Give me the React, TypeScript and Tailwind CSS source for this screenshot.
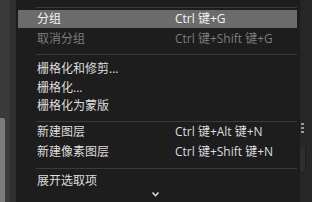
import React from 'react';

type Item = { label: string; shortcut?: string; disabled?: boolean; active?: boolean; mt: string };

const font = { fontFamily: '"Open Sans", "Noto Sans CJK SC", sans-serif' };

function Row({ label, shortcut, disabled, active, mt }: Item) {
  return (
    <div
      className={`${mt} ml-[2px] mr-[3px] h-[18px] flex items-center pl-[19px] text-[12px] leading-none ${
        active ? 'bg-[#6b6b6b] text-[#f4f4f4]' : disabled ? 'text-[#7c7c7c]' : 'text-[#dddddd]'
      }`}
    >
      <span className="w-[138px] whitespace-nowrap">{label}</span>
      {shortcut && <span className="whitespace-nowrap">{shortcut}</span>}
    </div>
  );
}

function Sep({ mt }: { mt: string }) {
  return <div className={`${mt} ml-[20px] mr-[3px] h-px bg-[#3a3a3a]`} />;
}

export default function App() {
  return (
    <div className="w-[312px] h-[202px] flex overflow-hidden bg-[#1d1d1d]" style={font}>
      {/* left panel edge */}
      <div className="w-[16px] h-full flex">
        <div className="w-[10px] h-full bg-[#3a3a3a] flex flex-col">
          <div className="mt-[118px] w-[5px] flex-1 bg-[#7b7b7b] rounded-tr-[2px]" />
        </div>
        <div className="w-[6px] h-full bg-[#303030]" />
      </div>

      {/* menu */}
      <div className="w-[284px] h-full flex flex-col bg-[#1d1d1d]">
        <Sep mt="mt-[7px]" />
        <Row mt="mt-[2px]" label="分组" shortcut="Ctrl 键+G" active />
        <Row mt="mt-[2px]" label="取消分组" shortcut="Ctrl 键+Shift 键+G" disabled />
        <Sep mt="mt-[6px]" />
        <Row mt="mt-[5px]" label="栅格化和修剪..." />
        <Row mt="mt-[1px]" label="栅格化..." />
        <Row mt="mt-0" label="栅格化为蒙版" />
        <Sep mt="mt-[6px]" />
        <Row mt="mt-[1px]" label="新建图层" shortcut="Ctrl 键+Alt 键+N" />
        <Row mt="mt-[2px]" label="新建像素图层" shortcut="Ctrl 键+Shift 键+N" />
        <Sep mt="mt-[7px]" />
        <Row mt="mt-[3px]" label="展开选取项" />
        <div className="flex justify-center pr-[6px] mt-[2px]">
          <svg width="7" height="5" viewBox="0 0 7 5">
            <polyline points="0.5,0.5 3.5,3.8 6.5,0.5" fill="none" stroke="#e6e6e6" strokeWidth="1.4" />
          </svg>
        </div>
      </div>

      {/* right panel edge */}
      <div className="w-[12px] h-full bg-[#262626] flex flex-col items-start">
        <div className="mt-[123px] ml-[1px] flex flex-col gap-[2px]">
          <div className="w-[3px] h-[2px] bg-[#9a9a9a]" />
          <div className="w-[3px] h-[2px] bg-[#9a9a9a]" />
          <div className="w-[3px] h-[2px] bg-[#9a9a9a]" />
        </div>
        <div className="mt-[14px] w-[6px] h-[24px] bg-[#2e2e2e] border-r border-[#1e1e1e]" />
      </div>
    </div>
  );
}
